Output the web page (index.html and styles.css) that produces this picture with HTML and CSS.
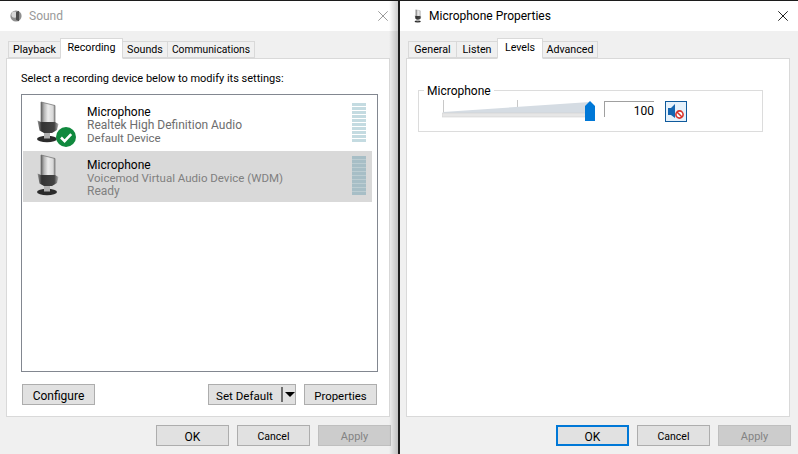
FILE: index.html
```html
<!DOCTYPE html>
<html lang="en">
<head>
<meta charset="utf-8">
<title>Sound</title>
<link rel="stylesheet" href="styles.css">
</head>
<body>
<svg class="defs" width="0" height="0" aria-hidden="true">
  <defs>
    <linearGradient id="micBody" x1="0" x2="1" y1="0" y2="0">
      <stop offset="0" stop-color="#5e5e5e"/>
      <stop offset=".22" stop-color="#b4b4b4"/>
      <stop offset=".5" stop-color="#ececec"/>
      <stop offset=".85" stop-color="#d8d8d8"/>
      <stop offset="1" stop-color="#8c8c8c"/>
    </linearGradient>
    <linearGradient id="micCollar" x1="0" x2="1" y1="0" y2="0">
      <stop offset="0" stop-color="#9a9a9a"/>
      <stop offset=".2" stop-color="#333"/>
      <stop offset=".8" stop-color="#444"/>
      <stop offset="1" stop-color="#b8b8b8"/>
    </linearGradient>
    <symbol id="mic" viewBox="0 0 24 44">
      <ellipse cx="11" cy="39" rx="10" ry="3.2" fill="#2b2b2b"/>
      <rect x="8" y="31" width="6" height="7.5" fill="#b0b0b0"/>
      <path d="M5 2 19 5.5V23H5z" fill="url(#micBody)" stroke="#6a6a6a" stroke-width=".7"/>
      <path d="M1.5 20.5 5 22h14l3.5 2L21 30l-5 3H8l-4.5-2.5z" fill="url(#micCollar)"/>
    </symbol>
  </defs>
</svg>

<section class="window">
  <header class="titlebar">
    <svg class="title-icon" width="12" height="14" viewBox="0 0 12 14" aria-hidden="true">
      <circle cx="6" cy="7" r="5.6" fill="#8e8e8e"/>
      <circle cx="4.6" cy="5.6" r="3.2" fill="#d8d8d8"/>
      <path d="M6 3.2 9 1.8v10.4L6 10.8z" fill="#4d4d4d"/>
    </svg>
    <span class="title title-inactive">Sound</span>
    <svg class="close" width="10" height="10" viewBox="0 0 10 10" aria-hidden="true"><path d="M.3.3l9.4 9.4M9.7.3.3 9.7" stroke="#9a9a9a" fill="none"/></svg>
  </header>
  <nav class="tabs">
    <span class="tab tab-playback">Playback</span>
    <span class="tab tab-active tab-recording">Recording</span>
    <span class="tab tab-sounds">Sounds</span>
    <span class="tab tab-comm">Communications</span>
  </nav>
  <main class="panel panel-devices">
    <p class="prompt">Select a recording device below to modify its settings:</p>
    <div class="device-list">
      <div class="device">
        <svg class="device-icon" width="42" height="50" viewBox="0 0 42 50" aria-hidden="true">
          <use href="#mic" width="24" height="44"/>
          <circle cx="30" cy="37" r="10" fill="#10893e"/>
          <path d="M25 37.5l3.6 3.6 6.6-7" fill="none" stroke="#fff" stroke-width="2.6"/>
        </svg>
        <div class="device-text">
          <div class="device-name">Microphone</div>
          <div>Realtek High Definition Audio</div>
          <div class="device-sub">Default Device</div>
        </div>
        <div class="levels"></div>
      </div>
      <div class="device device-selected">
        <svg class="device-icon" width="42" height="50" viewBox="0 0 42 50" aria-hidden="true">
          <use href="#mic" width="24" height="44"/>
        </svg>
        <div class="device-text">
          <div class="device-name">Microphone</div>
          <div class="device-sub">Voicemod Virtual Audio Device (WDM)</div>
          <div>Ready</div>
        </div>
        <div class="levels"></div>
      </div>
    </div>
    <div class="device-actions">
      <button class="btn">Configure</button>
      <button class="btn btn-split"><span class="split-label">Set Default</span><i class="split-sep"></i><i class="split-arrow"></i></button>
      <button class="btn btn-props">Properties</button>
    </div>
  </main>
  <footer class="footer">
    <button class="btn">OK</button>
    <button class="btn btn-cancel">Cancel</button>
    <button class="btn btn-disabled">Apply</button>
  </footer>
</section>

<div class="divider"></div>

<section class="window">
  <header class="titlebar">
    <svg class="title-icon title-icon-mic" width="12" height="14" viewBox="0 0 24 44" aria-hidden="true"><use href="#mic" width="24" height="44"/></svg>
    <span class="title">Microphone Properties</span>
    <svg class="close" width="10" height="10" viewBox="0 0 10 10" aria-hidden="true"><path d="M.3.3l9.4 9.4M9.7.3.3 9.7" stroke="#222" fill="none"/></svg>
  </header>
  <nav class="tabs">
    <span class="tab tab-general">General</span>
    <span class="tab tab-listen">Listen</span>
    <span class="tab tab-active tab-levels">Levels</span>
    <span class="tab tab-advanced">Advanced</span>
  </nav>
  <main class="panel panel-levels">
    <fieldset class="group">
      <legend class="group-label">Microphone</legend>
      <div class="meter">
        <svg class="slider" width="155" height="22" viewBox="0 0 155 22" aria-hidden="true">
          <rect x="1" y="0" width="1" height="12" fill="#c8c8c8"/>
          <rect x="75" y="0" width="1" height="12" fill="#c8c8c8"/>
          <path d="M1 12 148 2v11H1z" fill="#d5dce3"/>
          <rect x="0" y="13" width="148" height="4" fill="#e6e6e6" stroke="#d0d0d0" stroke-width=".6"/>
          <path d="M143 6 148 1l5 5v15h-10z" fill="#0078d7"/>
        </svg>
        <div class="level-input">100</div>
        <button class="mute" aria-label="Mute">
          <svg width="18" height="17" viewBox="0 0 18 17" aria-hidden="true">
            <path d="M1 5h3l4-4v14l-4-3H1z" fill="#1565b0"/>
            <circle cx="12.5" cy="11.5" r="3.6" fill="#fff" stroke="#d8342c" stroke-width="1.6"/>
            <path d="M10 9l5 5" stroke="#d8342c" stroke-width="1.5"/>
          </svg>
        </button>
      </div>
    </fieldset>
  </main>
  <footer class="footer">
    <button class="btn btn-default">OK</button>
    <button class="btn btn-cancel">Cancel</button>
    <button class="btn btn-disabled">Apply</button>
  </footer>
</section>
</body>
</html>
```
FILE: styles.css
```css
* { box-sizing: border-box; }
html, body { margin: 0; padding: 0; }
body {
  width: 798px;
  height: 454px;
  overflow: hidden;
  display: flex;
  border-top: 1px solid #1c1c1c;
  background: #f0f0f0;
  font-family: Roboto, "Noto Sans", sans-serif;
  font-size: 12px;
  color: #000;
}
.defs { position: absolute; }
.window {
  position: relative;
  width: 398px;
  height: 453px;
  display: flex;
  flex-direction: column;
  background: #f0f0f0;
}
.window:first-of-type::after {
  content: "";
  position: absolute;
  top: 0;
  bottom: 0;
  right: 0;
  width: 9px;
  background: linear-gradient(to right, rgba(0,0,0,0), rgba(0,0,0,.2));
}
.divider { width: 2px; height: 453px; background: #1c1c1c; }
.titlebar {
  height: 30px;
  background: #fff;
  display: flex;
  align-items: center;
  padding-left: 10px;
  padding-right: 10px;
}
.title-icon { margin-right: 7px; }
.title-icon-mic { margin-left: 2px; margin-right: 5px; }
.title { font-size: 12px; }
.title-inactive { color: #999; }
.close { margin-left: auto; }

.tabs {
  height: 27px;
  display: flex;
  align-items: flex-end;
  padding-left: 8px;
  position: relative;
  z-index: 1;
}
.tab {
  height: 17px;
  line-height: 16px;
  text-align: center;
  font-size: 10.7px;
  background: #f0f0f0;
  border: 1px solid #d9d9d9;
  border-left-width: 0;
}
.tab:first-child { border-left-width: 1px; }
.tab-active {
  height: 21px;
  line-height: 17px;
  margin-bottom: -1px;
  background: #fff;
  border-left-width: 1px;
  border-bottom-color: #fff;
}
.tab-playback { width: 53px; }
.tab-recording { width: 63px; margin-left: -1px; }
.tab-sounds { width: 45px; }
.tab-comm { width: 87px; font-size: 10.3px; }
.tab-general { width: 49px; }
.tab-listen { width: 41px; }
.tab-levels { width: 46px; margin-left: -1px; }
.tab-advanced { width: 55px; }

.panel {
  width: 384px;
  height: 359px;
  margin-left: 6px;
  background: #fff;
  border: 1px solid #d9d9d9;
}
.panel-devices { padding: 12px 0 0 14px; }
.panel-levels { padding: 24px 0 0 11px; }
.prompt { margin: 0 0 7px; line-height: 16px; font-size: 11px; }

.device-list {
  width: 357px;
  height: 278px;
  border: 1px solid #828790;
  padding: 3px 0 0 1px;
  display: flex;
  flex-direction: column;
  gap: 2px;
}
.device {
  width: 349px;
  height: 51px;
  display: flex;
  padding-left: 13px;
  padding-top: 2px;
}
.device-selected { background: #d9d9d9; }
.device-icon { flex: none; margin-right: 9px; }
.device-text {
  margin-top: 6px;
  line-height: 13px;
  color: #6d6d6d;
  white-space: nowrap;
}
.device-selected .device-text { color: #808080; }
.device-name { color: #000; }
.device-sub { font-size: 11.5px; }
.levels {
  width: 14px;
  height: 39px;
  margin-left: auto;
  margin-right: 6px;
  margin-top: 3px;
  background: repeating-linear-gradient(to bottom, #c4dbe1 0, #c4dbe1 3px, #fff 3px, #fff 4px);
}
.device-selected .levels {
  background: repeating-linear-gradient(to bottom, #a7bec6 0, #a7bec6 3px, #bccdd2 3px, #bccdd2 4px);
}

.device-actions {
  display: flex;
  margin-top: 12px;
  padding-left: 1px;
  width: 356px;
}
.btn {
  width: 73px;
  height: 21px;
  padding: 3px 0 0;
  background: #e1e1e1;
  border: 1px solid #adadad;
  font: inherit;
  line-height: 16px;
  color: #000;
}
.btn-cancel { font-size: 10.5px; }
.btn-split {
  width: 88px;
  margin-left: auto;
  display: flex;
  align-items: center;
  padding: 0 0 0 7px;
}
.split-label { width: 66px; white-space: nowrap; text-align: left; padding-top: 3px; font-size: 11.6px; }
.split-sep { width: 2px; height: 15px; background: #6e6e6e; flex: none; }
.split-arrow {
  width: 0;
  height: 0;
  flex: none;
  margin-left: 2px;
  border: 5px solid transparent;
  border-top: 5px solid #000;
  border-bottom: 0;
}
.btn-props { margin-left: 8px; font-size: 11.4px; }
.btn-disabled { background: #ccc; border-color: #bfbfbf; color: #838383; font-size: 11px; }
.btn-default { border: 2px solid #0078d7; padding-top: 2px; }

.footer {
  display: flex;
  justify-content: flex-end;
  gap: 8px;
  padding-right: 7px;
  margin-top: 8px;
}

.group {
  width: 345px;
  margin: 0;
  padding: 0 0 9px;
  border: 1px solid #dcdcdc;
  min-inline-size: 0;
}
.group-label {
  margin-left: 5px;
  padding: 1px 3px 0;
  line-height: 14px;
}
.meter {
  display: flex;
  align-items: flex-start;
  padding: 2px 0 0 23px;
}
.level-input {
  width: 50px;
  height: 16px;
  margin: 1px 0 0 7px;
  border-top: 1px solid #a0a0a0;
  border-left: 1px solid #a0a0a0;
  text-align: right;
  line-height: 18px;
}
.mute {
  width: 22px;
  height: 21px;
  margin: 1px 0 0 11px;
  padding: 1px;
  background: #e5f1fb;
  border: 1px solid #0f5a9c;
  display: flex;
  align-items: center;
  justify-content: center;
}
```
